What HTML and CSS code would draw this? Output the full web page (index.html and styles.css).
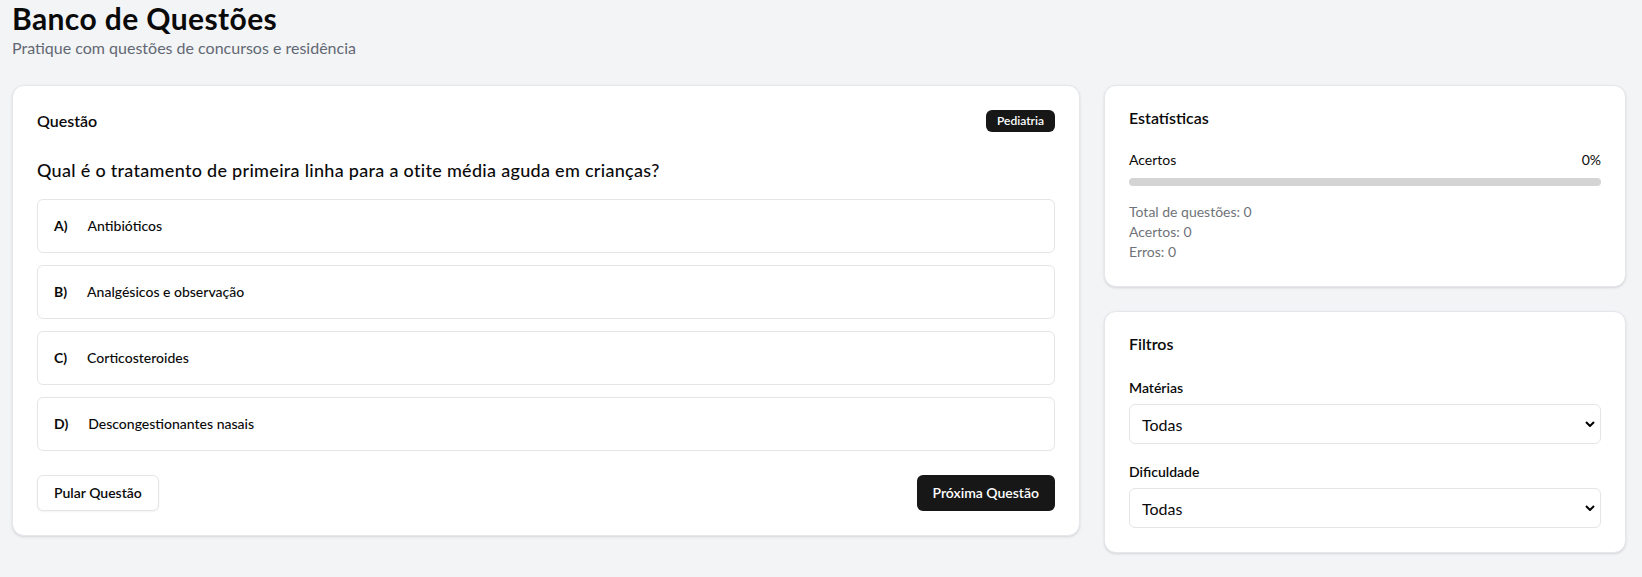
FILE: index.html
```html
<!DOCTYPE html>
<html lang="pt-BR">
<head>
<meta charset="utf-8">
<title>Banco de Questões</title>
<link rel="stylesheet" href="styles.css">
</head>
<body>
<div class="page">
  <header class="page-header">
    <h1 class="page-title">Banco de Questões</h1>
    <p class="page-subtitle">Pratique com questões de concursos e residência</p>
  </header>

  <div class="layout">
    <section class="card question-card">
      <div class="card-header card-header-row">
        <h2 class="card-title">Questão</h2>
        <span class="badge">Pediatria</span>
      </div>
      <div class="card-content">
        <h3 class="question">Qual é o tratamento de primeira linha para a otite média aguda em crianças?</h3>
        <div class="options">
          <button class="option"><span class="option-letter">A)</span><span class="option-text">Antibióticos</span></button>
          <button class="option"><span class="option-letter">B)</span><span class="option-text">Analgésicos e observação</span></button>
          <button class="option"><span class="option-letter">C)</span><span class="option-text">Corticosteroides</span></button>
          <button class="option"><span class="option-letter">D)</span><span class="option-text">Descongestionantes nasais</span></button>
        </div>
        <div class="actions">
          <button class="btn btn-outline">Pular Questão</button>
          <button class="btn btn-primary">Próxima Questão</button>
        </div>
      </div>
    </section>

    <aside class="sidebar">
      <section class="card">
        <div class="card-header">
          <h2 class="card-title">Estatísticas</h2>
        </div>
        <div class="card-content">
          <div class="stat-row"><span>Acertos</span><span>0%</span></div>
          <div class="progress"><div class="progress-bar" style="width:0%"></div></div>
          <div class="stat-list">
            <p>Total de questões: 0</p>
            <p>Acertos: 0</p>
            <p>Erros: 0</p>
          </div>
        </div>
      </section>

      <section class="card">
        <div class="card-header">
          <h2 class="card-title">Filtros</h2>
        </div>
        <div class="card-content fields">
          <div class="field">
            <label class="field-label" for="materias">Matérias</label>
            <select class="select" id="materias"><option>Todas</option></select>
          </div>
          <div class="field">
            <label class="field-label" for="dificuldade">Dificuldade</label>
            <select class="select" id="dificuldade"><option>Todas</option></select>
          </div>
        </div>
      </section>
    </aside>
  </div>
</div>
</body>
</html>
```

FILE: styles.css
```css
* { box-sizing: border-box; }

html, body {
  margin: 0;
  background: #f3f4f6;
}

body {
  font-family: "Lato", "Segoe UI", "Noto Sans", sans-serif;
  color: #0a0a0a;
}

.page {
  padding: 0 16px 24px 12px;
}

.page-header {
  margin-bottom: 25px;
}

.page-title {
  margin: 0;
  font-size: 30px;
  line-height: 36px;
  font-weight: 700;
  letter-spacing: 0.4px;
}

.page-subtitle {
  margin: 0;
  font-size: 16px;
  line-height: 24px;
  color: #626873;
}

.layout {
  display: grid;
  grid-template-columns: repeat(3, minmax(0, 1fr));
  gap: 24px;
  align-items: start;
}

.question-card {
  grid-column: span 2;
}

.sidebar {
  display: flex;
  flex-direction: column;
  gap: 24px;
}

.card {
  background: #fff;
  border: 1px solid #e5e7eb;
  border-radius: 12px;
  box-shadow: 0 1px 3px rgba(0, 0, 0, 0.1), 0 1px 2px -1px rgba(0, 0, 0, 0.1);
}

.card-header {
  padding: 24px;
}

.card-header-row {
  display: flex;
  align-items: center;
  justify-content: space-between;
}

.card-title {
  margin: 0;
  font-size: 16px;
  line-height: 16px;
  font-weight: 600;
}

.card-content {
  padding: 0 24px 24px;
}

.badge {
  display: inline-flex;
  align-items: center;
  background: #171717;
  color: #fff;
  border: 1px solid transparent;
  border-radius: 6px;
  padding: 2px 10px;
  font-size: 12px;
  line-height: 16px;
  font-weight: 600;
}

.question {
  margin: 0 0 15px;
  font-size: 18px;
  line-height: 28px;
  font-weight: 500;
  letter-spacing: 0.3px;
}

.options {
  display: flex;
  flex-direction: column;
  gap: 12px;
}

.option {
  display: flex;
  align-items: center;
  width: 100%;
  padding: 16px;
  border: 1px solid #e5e5e5;
  border-radius: 6px;
  background: #fff;
  font-family: inherit;
  font-size: 14px;
  line-height: 20px;
  color: #0a0a0a;
  text-align: left;
}

.option-letter {
  font-weight: 700;
  margin-right: 20px;
}

.option-text {
  font-weight: 500;
}

.actions {
  display: flex;
  justify-content: space-between;
  margin-top: 24px;
}

.btn {
  height: 36px;
  padding: 0 16px;
  border-radius: 6px;
  font-family: inherit;
  font-size: 14px;
  line-height: 20px;
  font-weight: 600;
}

.btn-outline {
  background: #fff;
  border: 1px solid #e5e5e5;
  color: #0a0a0a;
  box-shadow: 0 1px 2px rgba(0, 0, 0, 0.05);
}

.btn-primary {
  background: #171717;
  color: #fff;
  border: 0;
}

.stat-row {
  display: flex;
  justify-content: space-between;
  font-size: 14px;
  line-height: 20px;
  margin-bottom: 8px;
}

.progress {
  height: 8px;
  border-radius: 9999px;
  background: #d4d4d4;
  overflow: hidden;
}

.progress-bar {
  height: 100%;
  background: #171717;
}

.stat-list {
  margin-top: 16px;
  font-size: 14px;
  line-height: 20px;
  color: #6f7378;
}

.stat-list p {
  margin: 0;
}

.fields {
  display: flex;
  flex-direction: column;
  gap: 16px;
}

.field-label {
  display: block;
  font-size: 14px;
  line-height: 20px;
  font-weight: 600;
  padding-top: 2px;
  margin-bottom: 6px;
}

.select {
  display: block;
  width: 100%;
  height: 40px;
  padding: 0 12px;
  border: 1px solid #e5e5e5;
  border-radius: 6px;
  font-family: inherit;
  font-size: 16px;
  color: #0a0a0a;
  -webkit-appearance: none;
  appearance: none;
  background: #fff url("data:image/svg+xml,%3Csvg xmlns='http://www.w3.org/2000/svg' width='10' height='6' viewBox='0 0 10 6'%3E%3Cpath d='M1 1l4 4 4-4' fill='none' stroke='%23000' stroke-width='2'/%3E%3C/svg%3E") no-repeat right 5px center;
}
```
